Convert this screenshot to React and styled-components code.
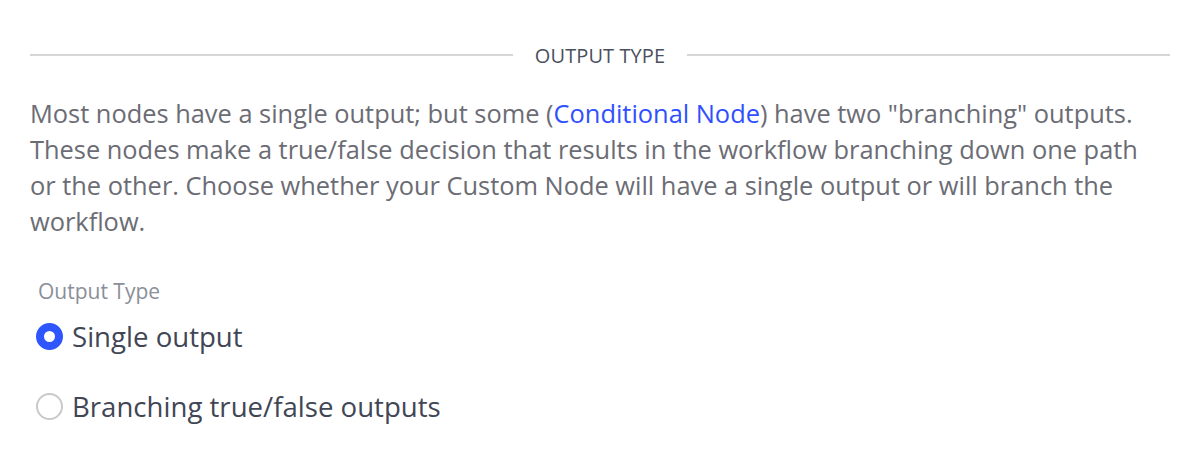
import React, { useState } from "react";
import styled, { createGlobalStyle } from "styled-components";

const Global = createGlobalStyle`
  html, body { margin: 0; padding: 0; background: #ffffff; }
  body { font-family: "Open Sans", "Noto Sans", sans-serif; }
`;

const Page = styled.div`
  width: 1200px;
  height: 470px;
  box-sizing: border-box;
  padding: 41px 30px 0 30px;
`;

const SectionHeader = styled.div`
  display: flex;
  align-items: center;
  gap: 22px;
  height: 28px;
`;

const Rule = styled.div`
  flex: 1;
  height: 2px;
  background: #d6d6d8;
`;

const HeaderTitle = styled.span`
  font-size: 20px;
  color: #4b5060;
  letter-spacing: 0.1px;
  text-transform: uppercase;
`;

const Description = styled.p`
  margin: 26px 0 0 0;
  font-size: 25.4px;
  line-height: 36px;
  color: #6b6c74;
`;

const Link = styled.a`
  color: #2f50ff;
  text-decoration: none;
`;

const Field = styled.fieldset`
  border: none;
  margin: 39px 0 0 0;
  padding: 0 0 0 6px;
`;

const Legend = styled.legend`
  padding: 0 0 0 2px;
  font-size: 21px;
  line-height: 26px;
  color: #8a8f99;
  margin-bottom: 12px;
`;

const Option = styled.label`
  display: flex;
  align-items: center;
  gap: 9px;
  height: 40px;
  margin-bottom: ${(p) => (p.$last ? "0" : "30px")};
  cursor: pointer;
  font-size: 27.6px;
  color: #414655;
`;

const Radio = styled.span`
  width: 27px;
  height: 27px;
  box-sizing: border-box;
  border-radius: 50%;
  flex-shrink: 0;
  border: ${(p) => (p.$checked ? "8.5px solid #2f55ff" : "2px solid #c9c9cc")};
  background: #fff;
`;

const HiddenInput = styled.input`
  position: absolute;
  opacity: 0;
  width: 0;
  height: 0;
  margin: 0;
`;

export default function App() {
  const [value, setValue] = useState("single");
  const options = [
    { id: "single", label: "Single output" },
    { id: "branch", label: "Branching true/false outputs" },
  ];
  return (
    <>
      <Global />
      <Page>
        <SectionHeader>
          <Rule />
          <HeaderTitle>Output Type</HeaderTitle>
          <Rule />
        </SectionHeader>
        <Description>
          Most nodes have a single output; but some (
          <Link href="#">Conditional Node</Link>) have two "branching" outputs.
          These nodes make a true/false decision that results in the workflow
          branching down one path or the other. Choose whether your Custom Node
          will have a single output or will branch the workflow.
        </Description>
        <Field>
          <Legend>Output Type</Legend>
          {options.map((o, i) => (
            <Option key={o.id} $last={i === options.length - 1}>
              <HiddenInput
                type="radio"
                name="outputType"
                checked={value === o.id}
                onChange={() => setValue(o.id)}
              />
              <Radio $checked={value === o.id} />
              {o.label}
            </Option>
          ))}
        </Field>
      </Page>
    </>
  );
}
